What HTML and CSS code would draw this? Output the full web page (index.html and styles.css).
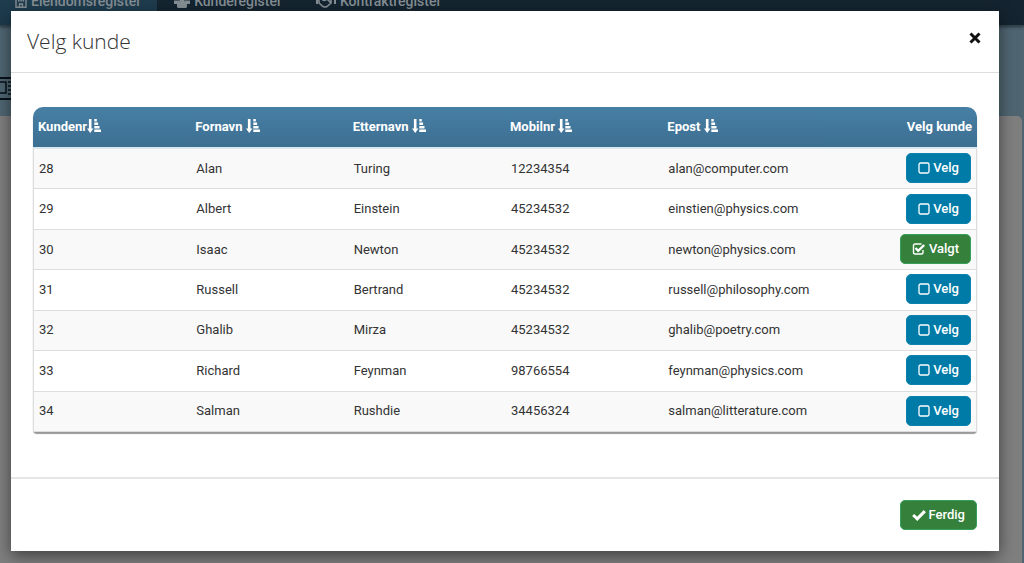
FILE: index.html
```html
<!DOCTYPE html>
<html lang="no">
<head>
<meta charset="utf-8">
<title>Velg kunde</title>
<link rel="stylesheet" href="styles.css">
<script src="app.js" defer></script>
</head>
<body>
<svg class="sprite" aria-hidden="true">
  <symbol id="sort" viewBox="0 0 14 14"><path d="M1.900 0h2.600v9.500h2L3.200 14 0 9.500h1.900zM7.300 0h2.500v2.400H7.300zM7.300 3.500h3.800v2.400H7.300zM7.300 7h5.200v2.400H7.300zM7.300 10.500H14v2.500H7.300z"/></symbol>
  <symbol id="box" viewBox="0 0 12 12"><rect x="1" y="1" width="10" height="10" rx="1.500" fill="none" stroke="currentColor" stroke-width="1.300"/></symbol>
  <symbol id="boxcheck" viewBox="0 0 13 12"><path d="M10.500 7v2.500q0 1.500-1.500 1.500H2.500Q1 11 1 9.500v-7Q1 1 2.500 1H9" fill="none" stroke="currentColor" stroke-width="1.400"/><path d="M3 5l2.700 2.800 6-5.800" fill="none" stroke="currentColor" stroke-width="2.400"/></symbol>
  <symbol id="check" viewBox="0 0 12 10"><path d="M1 5l3.500 3.300L11 1.700" fill="none" stroke="currentColor" stroke-width="2.600"/></symbol>
  <symbol id="cross" viewBox="0 0 12 12"><path d="M1.500 1.500l9 9M10.500 1.500l-9 9" stroke="currentColor" stroke-width="3"/></symbol>
  <symbol id="building" viewBox="0 0 12 14"><path d="M1 .7h10v12.600H1zM4.500 13v-3h3v3" fill="none" stroke="currentColor" stroke-width="1.400"/><path d="M3 3h1.500v1.500H3zM5.300 3h1.500v1.500H5.300zM7.600 3h1.500v1.500H7.600zM3 6h1.500v1.500H3zM5.300 6h1.500v1.500H5.300zM7.600 6h1.500v1.500H7.600z"/></symbol>
  <symbol id="users" viewBox="0 0 16 14"><circle cx="3" cy="4" r="2"/><circle cx="13" cy="4" r="2"/><circle cx="8" cy="4" r="3.500"/><path d="M0 6.500h5V10H0zM11 6.500h5V10h-5zM3 13q-.500-5 3-6h4q3.500 1 3 6l-1 1H4z"/></symbol>
  <symbol id="hands" viewBox="0 0 20 14"><path d="M3 3l3-1 3 1 2-1 4 1v6l-4 3.500q-2 1-4 0L3 9zM8 3L7 6q2 1 4-1l4 4" fill="none" stroke="currentColor" stroke-width="1.600"/><path d="M0 3h2v7H0zM18 3h2v7h-2z"/></symbol>
</svg>
<div class="page">
  <nav class="nav">
    <a class="nav-link active" href="#"><svg class="nav-icon"><use href="#building"/></svg>Eiendomsregister</a>
    <a class="nav-link" href="#"><svg class="nav-icon wide"><use href="#users"/></svg>Kunderegister</a>
    <a class="nav-link" href="#"><svg class="nav-icon wider"><use href="#hands"/></svg>Kontraktregister</a>
  </nav>
  <div class="banner">
    <svg class="banner-icon" viewBox="0 0 12 23"><path d="M0 1h12M0 22h12" stroke="#081119" stroke-width="2"/><path d="M0 5h6v11H0M8 5h4M8 9h4M8 13h4M8 17h4" fill="none" stroke="#081119" stroke-width="1.500"/></svg>
  </div>
  <div class="panel"></div>
</div>
<div class="overlay">
  <section class="modal" role="dialog" aria-labelledby="title">
    <header class="modal-head">
      <h1 id="title">Velg kunde</h1>
      <button class="close" type="button" aria-label="Lukk"><svg><use href="#cross"/></svg></button>
    </header>
    <div class="modal-body">
      <table class="customers">
        <thead>
          <tr>
            <th>Kundenr<svg class="sort"><use href="#sort"/></svg></th>
            <th>Fornavn <svg class="sort"><use href="#sort"/></svg></th>
            <th>Etternavn <svg class="sort"><use href="#sort"/></svg></th>
            <th>Mobilnr <svg class="sort"><use href="#sort"/></svg></th>
            <th>Epost <svg class="sort"><use href="#sort"/></svg></th>
            <th class="pick">Velg kunde</th>
          </tr>
        </thead>
        <tbody id="rows"></tbody>
      </table>
    </div>
    <footer class="modal-foot">
      <button class="btn green" type="button"><svg class="icon-check"><use href="#check"/></svg>Ferdig</button>
    </footer>
  </section>
</div>
</body>
</html>
```
FILE: styles.css
```css
* { box-sizing: border-box; }
body {
  margin: 0;
  height: 100vh;
  overflow: hidden;
  background: #1c3542;
  font-family: Roboto, "Liberation Sans", sans-serif;
  font-size: 13px;
  color: #333;
}
.sprite { display: none; }
svg { fill: currentColor; }
.page {
  display: flex;
  flex-direction: column;
  height: 100vh;
  background: #4f6672;
}
.nav {
  display: flex;
  flex: none;
  height: 26px;
  background: #142430;
  border-bottom: 1px solid #32434d;
  box-shadow: 0 1px 3px #26343c;
}
.nav-link {
  display: flex;
  align-items: center;
  gap: 4px;
  height: 26px;
  margin-top: -12px;
  padding: 0 17px;
  color: #858e94;
  font-size: 14px;
  font-weight: 500;
  text-decoration: none;
}
.nav-link.active {
  height: 37px;
  padding: 0 16px 11px 15px;
  background: linear-gradient(#203e4f, #1c3a4c);
}
.nav-icon { width: 12px; height: 14px; }
.nav-icon.wide { width: 16px; }
.nav-icon.wider { width: 20px; }
.banner { flex: none; height: 90px; padding-top: 51px; }
.banner-icon { display: block; width: 12px; height: 23px; }
.panel {
  flex: 1;
  margin-right: 2px;
  border-radius: 0 5px 0 0;
  background: #7f7f7f;
}
.overlay {
  position: absolute;
  inset: 0;
  padding: 11px 25px 12px 11px;
}
.modal {
  display: flex;
  flex-direction: column;
  min-height: 100%;
  background: #fff;
  box-shadow: 0 5px 15px rgba(0, 0, 0, .5);
}
.modal-head {
  display: flex;
  align-items: flex-start;
  justify-content: space-between;
  height: 62px;
  padding: 16px 16px 0;
  border-bottom: 1px solid #ddd;
}
h1 {
  margin: 0;
  font: 300 21px/28px "Open Sans", sans-serif;
  color: #333;
}
.close {
  width: 14px;
  height: 22px;
  padding: 0;
  border: 0;
  background: none;
  color: #111;
}
.close svg { display: block; width: 12px; height: 12px; }
.modal-body { flex: 1; padding: 34px 22px 0; }
.customers {
  width: 100%;
  height: 325px;
  table-layout: fixed;
  border-spacing: 0;
  border-radius: 10px 10px 4px 4px;
  box-shadow: 0 2px 1px #999;
}
.customers th {
  height: 42px;
  padding: 0 5px 2px;
  background: linear-gradient(#477fa4, #3c6f92);
  border-bottom: 2px solid #d9e7ef;
  color: #fff;
  font-weight: 700;
  text-align: left;
}
.customers th:first-child { border-top-left-radius: 10px; }
.customers th:last-child { border-top-right-radius: 10px; }
.customers td {
  padding: 0 6px 1px;
  border-bottom: 1px solid #ddd;
}
.customers td:first-child { border-left: 1px solid #ddd; padding-left: 5px; }
.customers td:last-child { border-right: 1px solid #ddd; padding-right: 5px; }
.customers tr:nth-child(odd) td { background: #f9f9f9; }
.customers .pick { text-align: right; }
.sort { width: 14px; height: 14px; vertical-align: -2px; }
.btn {
  display: inline-flex;
  align-items: center;
  gap: 3px;
  height: 30px;
  padding: 0 11px;
  border: 1px solid #0c83ad;
  border-radius: 5px;
  background: #007ba7;
  color: #fff;
  font: 500 13px/20px Roboto, sans-serif;
}
.btn.green { background: #35803a; border-color: #35a05a; }
.icon-box { width: 12px; height: 12px; }
.icon-check { width: 14px; height: 12px; }
.modal-foot {
  display: flex;
  align-items: center;
  justify-content: flex-end;
  height: 74px;
  padding: 0 22px;
  border-top: 2px solid #e5e5e5;
}
```
FILE: app.js
```js
const customers = [
  [28, "Alan", "Turing", "12234354", "alan@computer.com"],
  [29, "Albert", "Einstein", "45234532", "einstien@physics.com"],
  [30, "Isaac", "Newton", "45234532", "newton@physics.com"],
  [31, "Russell", "Bertrand", "45234532", "russell@philosophy.com"],
  [32, "Ghalib", "Mirza", "45234532", "ghalib@poetry.com"],
  [33, "Richard", "Feynman", "98766554", "feynman@physics.com"],
  [34, "Salman", "Rushdie", "34456324", "salman@litterature.com"]
];
const selected = 30;
document.getElementById("rows").innerHTML = customers.map(row => {
  const chosen = row[0] === selected;
  const button = chosen
    ? '<button class="btn green" type="button"><svg class="icon-check"><use href="#boxcheck"/></svg>Valgt</button>'
    : '<button class="btn" type="button"><svg class="icon-box"><use href="#box"/></svg>Velg</button>';
  return "<tr>" + row.map(v => `<td>${v}</td>`).join("") + `<td class="pick">${button}</td></tr>`;
}).join("");
```
